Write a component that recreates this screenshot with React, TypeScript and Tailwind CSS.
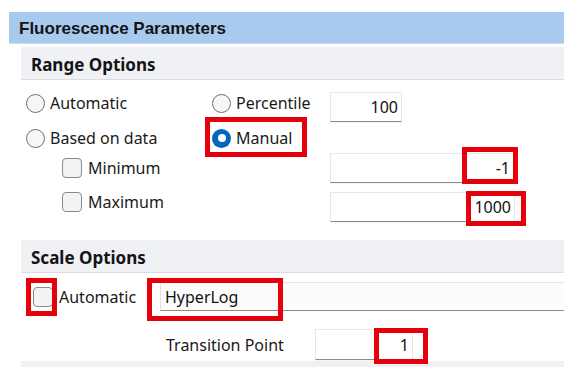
import React from "react";

const font = { fontFamily: '"Noto Sans", "Open Sans", sans-serif' };

function Radio({ checked, label }: { checked?: boolean; label: string }) {
  return (
    <div className="flex items-center gap-[5px]">
      {checked ? (
        <span className="w-[19px] h-[19px] rounded-full bg-[#0067c0] flex items-center justify-center">
          <span className="w-[8px] h-[8px] rounded-full bg-white" />
        </span>
      ) : (
        <span className="w-[19px] h-[19px] rounded-full border border-[#707070] bg-[#f6f6f6]" />
      )}
      <span className="text-[16px] leading-[20px] text-[#1a1a1a]">{label}</span>
    </div>
  );
}

function Check({ label }: { label?: string }) {
  return (
    <div className="flex items-center gap-[6px]">
      <span className="w-[20px] h-[20px] rounded-[4px] border border-[#8a8a8a] bg-[#f3f3f3]" />
      {label && <span className="text-[16px] leading-[20px] text-[#1a1a1a]">{label}</span>}
    </div>
  );
}

function Field({ value, className }: { value: string; className: string }) {
  return (
    <div
      className={`bg-white border border-[#e6e6e6] border-b-[#8c8c8c] shadow-[0_1px_1px_rgba(0,0,0,0.04)] flex items-center justify-end pr-[3px] text-[16px] text-[#111] ${className}`}
    >
      {value}
    </div>
  );
}

function RedBox({ className }: { className: string }) {
  return <div className={`absolute border-[5px] border-[#e5000c] ${className}`} />;
}

export default function App() {
  return (
    <div className="relative w-[564px] h-[367px] bg-white overflow-hidden" style={font}>
      <div className="pt-[12px] pl-[9px]">
        <div
          className="h-[32px] bg-[#a8caee] border-b border-[#cadcf1] pl-[10px] pt-[3px] flex items-center text-[17px] font-bold text-[#141414]"
          style={{ fontFamily: '"Liberation Sans", Arial, sans-serif' }}
        >
          Fluorescence Parameters
        </div>
        <div className="pl-[12px] pt-[3px]">
          <div className="h-[33px] bg-[#f0f1f5] border-b border-[#dcdde2] pl-[10px] pt-[4px] flex items-center text-[17px] font-bold text-[#141414]">
            Range Options
          </div>
          <div className="pl-[5px]">
            <div className="mt-[12px] h-[30px] flex items-start">
              <div className="w-[186px] pt-[1px]">
                <Radio label="Automatic" />
              </div>
              <div className="w-[118px] pt-[1px]">
                <Radio label="Percentile" />
              </div>
              <Field value="100" className="w-[72px] h-[30px]" />
            </div>
            <div className="mt-[6px] h-[20px] flex items-center">
              <div className="w-[186px]">
                <Radio label="Based on data" />
              </div>
              <Radio checked label="Manual" />
            </div>
            <div className="mt-[5px] h-[30px] flex items-start">
              <div className="w-[304px] pl-[36px] pt-[5px]">
                <Check label="Minimum" />
              </div>
              <Field value="-1" className="w-[184px] h-[30px]" />
            </div>
            <div className="mt-[9px] h-[30px] flex items-start">
              <div className="w-[304px] pl-[36px]">
                <Check label="Maximum" />
              </div>
              <Field value="1000" className="w-[185px] h-[30px]" />
            </div>
          </div>
          <div className="mt-[18px] h-[33px] bg-[#f0f1f5] border-b border-[#dcdde2] pl-[10px] pt-[4px] flex items-center text-[17px] font-bold text-[#141414]">
            Scale Options
          </div>
          <div className="mt-[9px] h-[29px] flex items-center">
            <div className="w-[139px] pl-[12px]">
              <Check label="Automatic" />
            </div>
            <div className="flex-1 h-[29px] bg-[#fcfcfc] border border-[#e3e3e3] border-b-[#8c8c8c] border-r-0 flex items-center pl-[4px] text-[16px] text-[#111]">
              HyperLog
            </div>
          </div>
          <div className="mt-[18px] h-[31px] flex items-center">
            <div className="w-[294px] pl-[145px] text-[16px] text-[#1a1a1a]">Transition Point</div>
            <Field value="1" className="w-[98px] h-[31px]" />
          </div>
          <div className="mt-[1px] h-[10px] bg-[#f0f1f5]" />
        </div>
      </div>

      <RedBox className="left-[205px] top-[117px] w-[102px] h-[40px]" />
      <RedBox className="left-[462px] top-[147px] w-[56px] h-[37px]" />
      <RedBox className="left-[466px] top-[191px] w-[60px] h-[35px]" />
      <RedBox className="left-[26px] top-[278px] w-[31px] h-[38px]" />
      <RedBox className="left-[147px] top-[278px] w-[136px] h-[43px]" />
      <RedBox className="left-[374px] top-[328px] w-[54px] h-[36px]" />
    </div>
  );
}
